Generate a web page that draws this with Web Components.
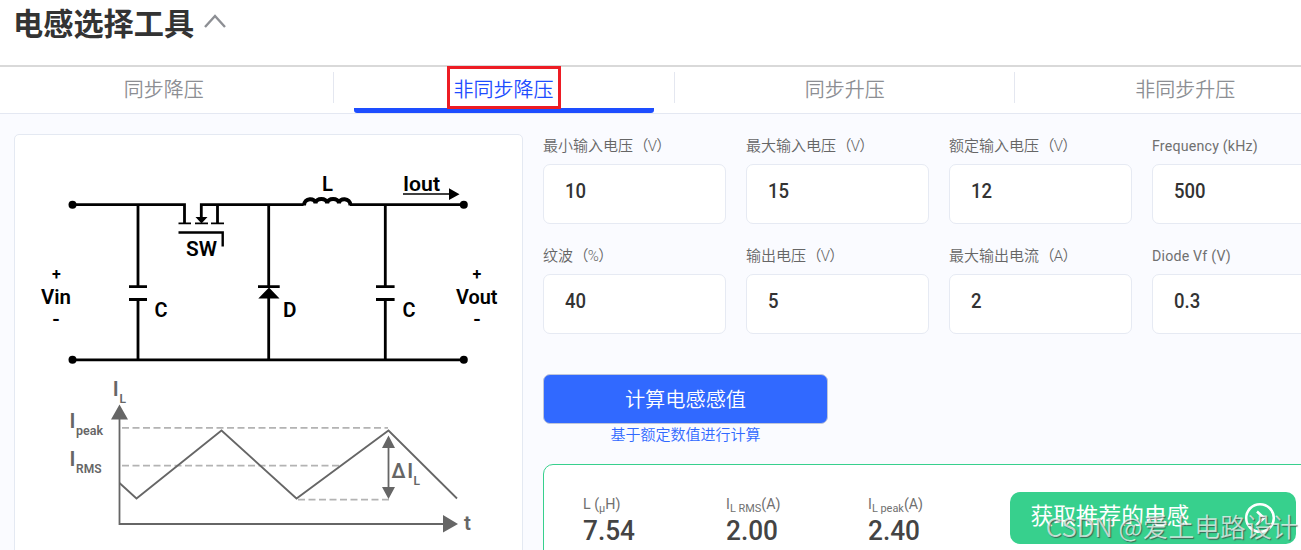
<!DOCTYPE html>
<html lang="zh-CN">
<head>
<meta charset="utf-8">
<title>电感选择工具</title>
<style>
  body {
    margin: 0;
    height: 550px;
    overflow: hidden;
    background: #fff;
    color: #333;
    font-family: Roboto, "Noto Sans CJK SC", sans-serif;
  }
</style>
</head>
<body>
<inductor-tool></inductor-tool>

<script>
function define(name, html, setup) {
  const $template = document.createElement("template");
  $template.innerHTML = html;
  customElements.define(name, class extends HTMLElement {
    constructor() {
      super();
      this.attachShadow({ mode: "open" });
      this.shadowRoot.appendChild($template.content.cloneNode(true));
    }

    connectedCallback() {
      if (setup) setup(this, this.shadowRoot);
    }
  });
}

define("tool-header", /*html*/ `
  <style>
    :host {
      display: flex;
      box-sizing: border-box;
      height: 67px;
      padding: 0 13px;
      border-bottom: 2px solid #d9d9d9;
    }

    h1 {
      margin: 0;
      font: bold 30.2px/44px "Noto Sans CJK SC", sans-serif;
    }

    svg {
      margin: 12px 0 0 10px;
    }
  </style>
  <h1><slot></slot></h1>
  <svg width="22" height="16" fill="none" stroke="#8d8f94" stroke-width="2.4">
    <path d="M1 15 11 4l10 11"/>
  </svg>
`);

define("tool-tab", /*html*/ `
  <style>
    :host {
      display: flex;
      flex: 0 0 340.5px;
      flex-direction: column;
      align-items: center;
      justify-content: space-between;
      box-sizing: border-box;
      height: 46px;
      color: #8c8e93;
      background: linear-gradient(#e4e7f0, #e4e7f0) right 5px / 1px 31px no-repeat;
    }

    span {
      box-sizing: border-box;
      height: 41px;
      padding: 0 4px;
      border: 3px solid transparent;
      font: 350 20px/38px "Noto Sans CJK SC", sans-serif;
    }

    i {
      width: 300px;
      height: 5px;
      border-radius: 0 0 3px 3px;
    }

    :host([active]) {
      color: #1d4dff;
    }

    :host([active]) i {
      background: #1d4dff;
    }

    :host([marked]) span {
      height: 43px;
      margin: -1px 1.5px 0 0;
      line-height: 40px;
      border-color: #ed1c24;
      position: relative;
      z-index: 1;
    }

    :host([marked]) i {
      margin-top: -1px;
    }
  </style>
  <span><slot></slot></span>
  <i></i>
`);

define("tool-tabs", /*html*/ `
  <style>
    :host {
      display: flex;
      margin-left: -6.500px;
      border-bottom: 1px solid #e4e8f2;
    }
  </style>
  <slot></slot>
`);

define("circuit-card", /*html*/ `
  <style>
    :host {
      display: block;
      box-sizing: border-box;
      width: 509px;
      height: 430px;
      background: #fff;
      border: 1px solid #e4e9f2;
      border-radius: 5px;
    }

    svg {
      display: block;
    }

    text {
      font-family: Roboto, sans-serif;
      font-weight: 600;
      font-size: 20.5px;
    }

    .wire {
      fill: none;
      stroke: #000;
      stroke-width: 2.8;
    }

    .plot {
      fill: none;
      stroke: #666;
      stroke-width: 1.8;
    }

    .dash {
      stroke: #b3b3b3;
      stroke-dasharray: 7 3.5;
    }

    .grey {
      fill: #666;
    }

    .grey .sub {
      font-size: 12px;
    }
  </style>
  <svg width="507" height="415" viewBox="15 135 507 415">
    <g class="wire">
      <path d="M72 204.7H184.5V223M201.3 218V204.7H303.5M217.5 204.7V223M350 204.7H464M72 359.8H464"/>
      <path d="M138 204.7V286M138 300V359.8M268.7 204.7V286M268.7 297V359.8M385.3 204.7V286M385.3 300V359.8"/>
      <path d="M129 286.7H147M129 299.5H147M258 286.7H279.7M376 286.7H394.6M376 299.5H394.6"/>
      <path d="M178.5 232.5H222.7V246.5" stroke-width="2.4"/>
      <path d="M178.5 223.4H191M195 223.4H208M211 223.4H224" stroke-width="1.8"/>
      <path d="M304 205.5C304 197.500 315.500 197.500 315.500 203.500 315.500 197.500 327.200 197.500 327.200 203.500 327.200 197.500 339 197.500 339 203.500 339 197.500 350.500 197.500 350.500 205.500" stroke-width="4"/>
      <path d="M403 194H450" stroke-width="1.500"/>
    </g>
    <path d="M195.500 217H207.500L201.500 223.500ZM258.300 298.500H279.500L269 287.500ZM449 188.300 459.500 194.200 449 200Z"/>
    <circle cx="72.500" cy="204.700" r="4"/>
    <circle cx="463.800" cy="204.700" r="4"/>
    <circle cx="72.500" cy="359.800" r="4"/>
    <circle cx="463.800" cy="359.800" r="4"/>
    <text x="186" y="256" textLength="31" lengthAdjust="spacingAndGlyphs">SW</text>
    <text x="41" y="303.500" textLength="30" lengthAdjust="spacingAndGlyphs">Vin</text>
    <text x="456" y="303.500" textLength="41.500" lengthAdjust="spacingAndGlyphs">Vout</text>
    <text x="403" y="191" textLength="37" lengthAdjust="spacingAndGlyphs">Iout</text>
    <text x="322" y="191" textLength="11" lengthAdjust="spacingAndGlyphs">L</text>
    <text x="154.500" y="316.500" textLength="13" lengthAdjust="spacingAndGlyphs">C</text>
    <text x="283" y="316.500" textLength="13.500" lengthAdjust="spacingAndGlyphs">D</text>
    <text x="402.500" y="316.500" textLength="13" lengthAdjust="spacingAndGlyphs">C</text>
    <g text-anchor="middle">
      <text x="56.300" y="279.500" style="font-size: 16px">+</text>
      <text x="56" y="325.500">-</text>
      <text x="477" y="279.500" style="font-size: 16px">+</text>
      <text x="477" y="325.500">-</text>
    </g>

    <g class="plot">
      <path class="dash" d="M122 427.800H388M122 465.700H341M298 499.600H389"/>
      <path d="M119.500 415V524H446"/>
      <path d="M119.500 483 136.500 498.500 221.500 430.500 296.500 498.500 388.500 430.500 457 498.500"/>
      <path d="M388.500 445V490"/>
    </g>
    <g class="grey">
      <path d="M111 419.500 119.500 404.500 128 419.500ZM443 515V532.500L458 524ZM382 448 388.500 435.500 395 448ZM382 487H395L388.500 499Z"/>
      <text x="112.800" y="395.500">I</text>
      <text class="sub" x="119.500" y="402.500">L</text>
      <text x="69.600" y="427.800">I</text>
      <text class="sub" x="76" y="434.800" textLength="27" lengthAdjust="spacingAndGlyphs">peak</text>
      <text x="69.600" y="465.500">I</text>
      <text class="sub" x="76" y="472.500" textLength="25.500" lengthAdjust="spacingAndGlyphs">RMS</text>
      <text x="391.500" y="477.500" textLength="14" lengthAdjust="spacingAndGlyphs">Δ</text>
      <text x="407.200" y="477.500">I</text>
      <text class="sub" x="413.500" y="484.800">L</text>
      <text x="464" y="529.500">t</text>
    </g>
  </svg>
`);

define("value-field", /*html*/ `
  <style>
    :host {
      display: flex;
      flex-direction: column;
      gap: 6px;
    }

    label {
      height: 24px;
      color: #666;
      font: 350 15px/24px Roboto, "Noto Sans CJK SC", sans-serif;
      white-space: nowrap;
    }

    label.latin {
      color: #707070;
      font-size: 14.2px;
      font-weight: 400;
      letter-spacing: 0.2px;
    }

    label span {
      margin-left: 0.5px;
      letter-spacing: -0.7px;
    }

    div {
      box-sizing: border-box;
      height: 60px;
      padding: 0 20.5px;
      background: #fff;
      border: 1px solid #e6eaf3;
      border-radius: 7px;
      font-size: 19.5px;
      font-weight: 500;
      line-height: 53px;
    }

    div span {
      display: inline-block;
      transform: scaleX(0.95);
      transform-origin: left;
    }
  </style>
  <label></label>
  <div><span><slot></slot></span></div>
`, (host, root) => {
  const $label = root.querySelector("label");
  const label = host.getAttribute("label");
  $label.classList.toggle("latin", /^[A-Z]/.test(label));
  $label.innerHTML = label.replace(/（.*）/, "<span>$&</span>");
});

define("calc-button", /*html*/ `
  <style>
    :host {
      display: flex;
      flex-direction: column;
      width: 285px;
      text-align: center;
      font-family: "Noto Sans CJK SC", sans-serif;
    }

    button {
      height: 49.5px;
      padding: 0;
      color: #fff;
      background: #3169ff;
      border: 1px solid #bfc6da;
      border-radius: 7px;
      font: 350 20.2px/46px "Noto Sans CJK SC", sans-serif;
    }

    span {
      height: 22.5px;
      color: #3169ff;
      font-size: 15px;
      font-weight: 350;
      line-height: 20px;
    }
  </style>
  <button><slot></slot></button>
  <span><slot name="note"></slot></span>
`);

define("result-value", /*html*/ `
  <style>
    :host {
      display: flex;
      flex: 0 0 142.5px;
      flex-direction: column;
      color: #444;
    }

    span {
      height: 24px;
      color: #707070;
      font-size: 15px;
      font-weight: 400;
      line-height: 25px;
      white-space: nowrap;
      transform: scaleX(0.95);
      transform-origin: left;
    }

    b {
      font-size: 28.500px;
      font-weight: 500;
      line-height: 29px;
      transform: scaleX(0.92);
      transform-origin: left;
    }
  </style>
  <span><slot name="label"></slot></span>
  <b><slot></slot></b>
`);

define("recommend-button", /*html*/ `
  <style>
    :host {
      display: flex;
      align-items: center;
      justify-content: space-between;
      box-sizing: border-box;
      width: 286px;
      height: 52px;
      margin-left: -1px;
      padding: 0 20px 0 21px;
      color: #fff;
      background: #37d08d;
      border-radius: 10px;
      font: 400 22.7px/46px "Noto Sans CJK SC", sans-serif;
    }

    span {
      padding-bottom: 6px;
    }
  </style>
  <span><slot></slot></span>
  <svg width="32" height="32" fill="none" stroke="#fff" stroke-width="2.500">
    <circle cx="16" cy="16" r="13.800"/>
    <path d="M13 9.500 20 16l-7 6.500"/>
  </svg>
`);

define("result-panel", /*html*/ `
  <style>
    :host {
      display: flex;
      box-sizing: border-box;
      height: 120px;
      margin-top: 18px;
      padding: 27px 20px 0 39px;
      background: #fff;
      border: 1px solid #37d08d;
      border-radius: 10px;
    }

    sub {
      font-size: 11.500px;
      line-height: 0;
      vertical-align: -3px;
    }
  </style>
  <result-value><span slot="label">L (<sub>μ</sub>H)</span>7.54</result-value>
  <result-value><span slot="label">I<sub>L RMS</sub>(A)</span>2.00</result-value>
  <result-value><span slot="label">I<sub>L peak</sub>(A)</span>2.40</result-value>
  <recommend-button>获取推荐的电感</recommend-button>
`);

define("water-mark", /*html*/ `
  <style>
    :host {
      position: absolute;
      right: 3.5px;
      bottom: 7px;
      color: rgba(255, 255, 255, 0.7);
      font: 350 25.8px/34px "Noto Sans CJK SC", sans-serif;
      text-shadow: 1px 1px 1px rgba(60, 60, 60, 0.700);
      white-space: nowrap;
    }
  </style>
  <slot></slot>
`);

define("inductor-tool", /*html*/ `
  <style>
    :host {
      display: block;
      position: relative;
      height: 550px;
      overflow: hidden;
    }

    main {
      display: flex;
      gap: 20px;
      width: 1400px;
      height: 436px;
      padding: 20px 14px 0;
      background: #fafbff;
    }

    .fields {
      display: grid;
      grid-template-columns: repeat(4, 183px);
      gap: 20px;
    }

    .side {
      width: 812px;
    }

    calc-button {
      margin-top: 40px;
    }
  </style>
  <tool-header>电感选择工具</tool-header>
  <tool-tabs>
    <tool-tab>同步降压</tool-tab>
    <tool-tab active marked>非同步降压</tool-tab>
    <tool-tab>同步升压</tool-tab>
    <tool-tab>非同步升压</tool-tab>
  </tool-tabs>
  <main>
    <circuit-card></circuit-card>
    <div class="side">
      <div class="fields">
        <value-field label="最小输入电压（V）">10</value-field>
        <value-field label="最大输入电压（V）">15</value-field>
        <value-field label="额定输入电压（V）">12</value-field>
        <value-field label="Frequency (kHz)">500</value-field>
        <value-field label="纹波（%）">40</value-field>
        <value-field label="输出电压（V）">5</value-field>
        <value-field label="最大输出电流（A）">2</value-field>
        <value-field label="Diode Vf (V)">0.3</value-field>
      </div>
      <calc-button>计算电感感值<span slot="note">基于额定数值进行计算</span></calc-button>
      <result-panel></result-panel>
    </div>
  </main>
  <water-mark>CSDN @爱上电路设计</water-mark>
`);
</script>
</body>
</html>
